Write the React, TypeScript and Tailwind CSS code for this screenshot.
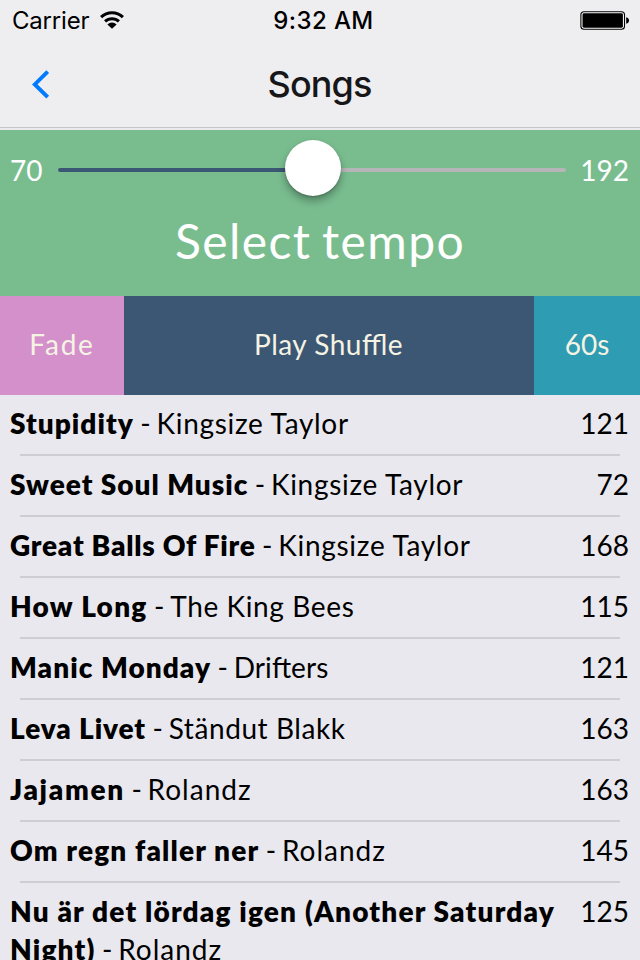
type Song = {
  title: string;
  artist: string;
  tempo: number;
  titleClass: string;
  artistClass: string;
};

const KINGSIZE = "tracking-[0.7px]";
const ROLANDZ = "tracking-[1px]";

const songs: Song[] = [
  { title: "Stupidity", artist: "Kingsize Taylor", tempo: 121, titleClass: "tracking-[1.03px]", artistClass: KINGSIZE },
  { title: "Sweet Soul Music", artist: "Kingsize Taylor", tempo: 72, titleClass: "tracking-[0.98px]", artistClass: KINGSIZE },
  { title: "Great Balls Of Fire", artist: "Kingsize Taylor", tempo: 168, titleClass: "tracking-[0.76px]", artistClass: KINGSIZE },
  { title: "How Long", artist: "The King Bees", tempo: 115, titleClass: "tracking-[1.25px]", artistClass: "tracking-[0.62px]" },
  { title: "Manic Monday", artist: "Drifters", tempo: 121, titleClass: "tracking-[1.05px]", artistClass: "tracking-[0.1px] [font-feature-settings:'liga'_1]" },
  { title: "Leva Livet", artist: "Ständut Blakk", tempo: 163, titleClass: "tracking-[0.9px]", artistClass: "tracking-[0.58px]" },
  { title: "Jajamen", artist: "Rolandz", tempo: 163, titleClass: "tracking-[1.7px]", artistClass: ROLANDZ },
  { title: "Om regn faller ner", artist: "Rolandz", tempo: 145, titleClass: "tracking-[1.15px]", artistClass: ROLANDZ },
  { title: "Nu är det lördag igen (Another Saturday Night)", artist: "Rolandz", tempo: 125, titleClass: "tracking-[1.18px]", artistClass: ROLANDZ },
];

function StatusBar() {
  return (
    <div className="grid h-10 grid-cols-3 items-start pl-3 pr-[10px] pt-1.5 text-2xl leading-[29px] text-black">
      <div className="flex items-start gap-[10px]">
        <span className="tracking-[-0.2px]">Carrier</span>
        <svg className="mt-1 h-5 w-[26px]" viewBox="0 0 26 20" fill="none" stroke="#000" strokeWidth="3.1">
          <path d="M2.1 7.1A15.9 15.9 0 0 1 23.9 7.1" />
          <path d="M6.1 11.4A10.1 10.1 0 0 1 19.9 11.4" />
          <path d="M13 18.8 8.4 14.4A6.4 6.4 0 0 1 17.6 14.4Z" fill="#000" stroke="none" />
        </svg>
      </div>
      <span className="pl-[5px] text-center font-medium tracking-[0.4px]">9:32 AM</span>
      <svg className="mt-1 h-5 w-[50px] justify-self-end" viewBox="0 0 50 20">
        <rect x="0.9" y="1.7" width="43.6" height="17.6" rx="3" fill="#fff" stroke="#000" strokeWidth="1.1" />
        <rect x="2.5" y="3.3" width="40.4" height="14.4" rx="1.4" fill="#000" />
        <path d="M46.2 7.2C50 8 50 13 46.2 13.8Z" fill="#000" />
      </svg>
    </div>
  );
}

function NavBar() {
  return (
    <div className="grid h-[87px] grid-cols-[64px_1fr_64px] items-center">
      <svg className="ml-8 h-8 w-5" viewBox="0 0 20 32" fill="none" stroke="#007aff" strokeWidth="3.9">
        <path d="M15.7 3.6 2.8 16.4 15.7 29.2" />
      </svg>
      <h1 className="pr-px pt-px text-center text-[36px] font-medium leading-[44px] tracking-[-0.9px] text-[#17171a]">
        Songs
      </h1>
    </div>
  );
}

function TempoPanel() {
  return (
    <section className="h-[166px] bg-[#79bd8f] text-white">
      <div className="flex h-20 items-center">
        <span className="w-[58px] pl-[10px] text-[28px] leading-8">70</span>
        <div className="relative flex h-1 w-[508px] overflow-visible rounded-full bg-[#b6b6b8]">
          <div className="h-1 w-[255px] rounded-full bg-[#3c5773]" />
          <div className="absolute left-[227px] top-[-30px] mt-0.5 size-14 rounded-full bg-white shadow-[0_5px_9px_rgba(0,0,0,0.32),0_1px_2px_rgba(0,0,0,0.2)]" />
        </div>
        <span className="flex-1 pr-[11px] text-right text-[28px] leading-8">192</span>
      </div>
      <p className="pt-0.5 text-center text-[48px] leading-[58px] tracking-[1.4px] [word-spacing:-3px]">
        Select tempo
      </p>
    </section>
  );
}

function Actions() {
  return (
    <div className="flex h-[99px] text-[28px] text-[#f5f3e4]">
      <button className="w-[124px] bg-[#d490cb] pb-[3px] tracking-[1.8px]">Fade</button>
      <button className="flex-1 bg-[#3c5773] pb-[3px] pr-px tracking-[0.5px] [font-feature-settings:'liga'_1]">
        Play Shuffle
      </button>
      <button className="w-[106px] bg-[#2e9cb2] pb-[3px]">60s</button>
    </div>
  );
}

function SongRow({ song }: { song: Song }) {
  return (
    <li className="pt-[9px]">
      <div className="flex items-start justify-between pl-[10px] pr-[11px] text-[28px] leading-[38px]">
        <p className="w-[556px]">
          <span className={`font-extrabold ${song.titleClass}`}>{song.title}</span>
          <span className="tracking-[-0.7px]"> - </span>
          <span className={song.artistClass}>{song.artist}</span>
        </p>
        <span>{song.tempo}</span>
      </div>
      <div className="mx-5 mt-3 h-0.5 bg-[#cecdd4]" />
    </li>
  );
}

export default function App() {
  return (
    <div className="h-[960px] w-[640px] overflow-hidden bg-[#e9e8ee] font-['Lato',sans-serif] text-black">
      <header className="h-[130px] bg-[#eeeef0] font-['Inter',sans-serif]">
        <StatusBar />
        <NavBar />
        <div className="h-px bg-[#c6c5cc]" />
        <div className="h-0.5 bg-[#ebeaef]" />
      </header>
      <TempoPanel />
      <Actions />
      <ul>
        {songs.map((song) => (
          <SongRow key={song.title} song={song} />
        ))}
      </ul>
    </div>
  );
}
